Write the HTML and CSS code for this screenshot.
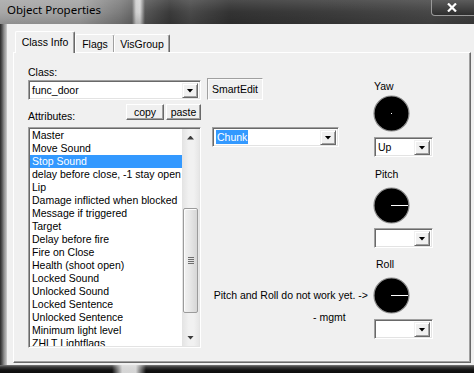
FILE: index.html
```html
<!DOCTYPE html>
<html lang="en">
<head>
    <meta charset="UTF-8">
    <meta name="viewport" content="width=device-width, initial-scale=1.0">
    <title>Object Properties</title>
    <link rel="stylesheet" href="styles.css">
</head>
<body>
    <div class="window">
        <div class="titlebar">
            <span class="title">Object Properties</span>
            <div class="close">
                <svg width="10" height="9" viewBox="0 0 10 9"><path d="M1 0.5 L9 8.5 M9 0.5 L1 8.5" stroke="#fff" stroke-width="2.2"/></svg>
            </div>
        </div>
        <div class="frame">
            <div class="edge-left"></div>
            <div class="client">
                <div class="tabs">
                    <div class="tab active">Class Info</div>
                    <div class="tab flags">Flags</div>
                    <div class="tab visgroup">VisGroup</div>
                </div>
                <div class="panel">
                    <!-- class + keyvalue list -->
                    <div class="col-left">
                        <div class="label">Class:</div>
                        <div class="combo class-combo">
                            <span class="combo-text">func_door</span>
                            <span class="drop"></span>
                        </div>
                        <div class="attr-row">
                            <div class="label attr-label">Attributes:</div>
                            <div class="buttons">
                                <button class="btn copy">copy</button>
                                <button class="btn paste">paste</button>
                            </div>
                        </div>
                        <div class="listbox">
                            <ul class="items">
                                <li>Master</li>
                                <li>Move Sound</li>
                                <li class="selected">Stop Sound</li>
                                <li>delay before close, -1 stay open</li>
                                <li>Lip</li>
                                <li>Damage inflicted when blocked</li>
                                <li>Message if triggered</li>
                                <li>Target</li>
                                <li>Delay before fire</li>
                                <li>Fire on Close</li>
                                <li>Health (shoot open)</li>
                                <li>Locked Sound</li>
                                <li>Unlocked Sound</li>
                                <li>Locked Sentence</li>
                                <li>Unlocked Sentence</li>
                                <li>Minimum light level</li>
                                <li>ZHLT Lightflags</li>
                            </ul>
                            <div class="scrollbar">
                                <div class="sb-btn"><span class="arrow up"></span></div>
                                <div class="sb-track">
                                    <div class="sb-thumb"><span class="grip"></span></div>
                                </div>
                                <div class="sb-btn"><span class="arrow down"></span></div>
                            </div>
                        </div>
                    </div>

                    <!-- value editor -->
                    <div class="col-mid">
                        <button class="btn smartedit">SmartEdit</button>
                        <div class="combo value-combo">
                            <span class="combo-text"><span class="hilite">Chunk</span></span>
                            <span class="drop"></span>
                        </div>
                        <div class="note">Pitch and Roll do not work yet. -&gt;</div>
                        <div class="note mgmt">- mgmt</div>
                    </div>

                    <!-- angles -->
                    <div class="col-right">
                        <div class="label dial-label yaw">Yaw</div>
                        <svg class="dial yaw-dial" width="37" height="37" viewBox="0 0 37 37">
                            <circle cx="18.5" cy="18.5" r="17.5" fill="#000" stroke="#8c8c8c" stroke-width="1.2"/>
                            <rect x="18" y="18" width="1" height="1" fill="#fff"/>
                        </svg>
                        <div class="combo angle-combo">
                            <span class="combo-text">Up</span>
                            <span class="drop"></span>
                        </div>

                        <div class="label dial-label pitch">Pitch</div>
                        <svg class="dial" width="37" height="37" viewBox="0 0 37 37">
                            <circle cx="18.5" cy="18.5" r="17.5" fill="#000" stroke="#8c8c8c" stroke-width="1.2"/>
                            <line x1="18" y1="18.5" x2="35" y2="18.5" stroke="#fff" stroke-width="1"/>
                        </svg>
                        <div class="combo angle-combo">
                            <span class="combo-text"></span>
                            <span class="drop"></span>
                        </div>

                        <div class="label dial-label roll">Roll</div>
                        <svg class="dial" width="37" height="37" viewBox="0 0 37 37">
                            <circle cx="18.5" cy="18.5" r="17.5" fill="#000" stroke="#8c8c8c" stroke-width="1.2"/>
                            <line x1="18" y1="18.5" x2="35" y2="18.5" stroke="#fff" stroke-width="1"/>
                        </svg>
                        <div class="combo angle-combo">
                            <span class="combo-text"></span>
                            <span class="drop"></span>
                        </div>
                    </div>
                </div>
            </div>
        </div>
        <div class="edge-bottom"></div>
    </div>
</body>
</html>
```

FILE: styles.css
```css
* {
    box-sizing: border-box;
}
body {
    margin: 0;
    background: #1c1c1c;
    font-family: 'Liberation Sans', Arial, sans-serif;
    font-size: 10.5px;
    color: #000;
}
.window {
    width: 474px;
    height: 373px;
    display: flex;
    flex-direction: column;
    overflow: hidden;
}

/* title bar */
.titlebar {
    height: 24px;
    flex: none;
    display: flex;
    align-items: flex-start;
    background:
        linear-gradient(180deg, rgba(255,255,255,0.12) 0, rgba(0,0,0,0) 12px, rgba(0,0,0,0.15) 24px),
        linear-gradient(90deg, #a8a8a8 0, #a2a2a2 80px, #7c7c7c 120px, #6a6a6a 132px, #cfcfcf 136px, #d6d6d6 140px, #565656 145px, #3a3a3a 170px, #4a4a4a 190px, #333 230px, #3c3c3c 330px, #474747 430px, #3e3e3e 474px);
}
.title {
    font-family: 'Noto Sans', sans-serif;
    font-size: 11.5px;
    line-height: 16px;
    padding: 2px 0 0 7px;
    color: #000;
}
.close {
    margin-left: auto;
    margin-right: -4px;
    width: 47px;
    height: 16px;
    border: 1px solid #9a9a9a;
    border-top: none;
    border-radius: 0 0 0 4px;
    background: linear-gradient(180deg, #5c5c5c, #2e2e2e);
    display: flex;
    align-items: center;
    justify-content: center;
    padding-right: 6px;
}

/* frame */
.frame {
    flex: 1;
    display: flex;
}
.edge-left {
    width: 7px;
    background: linear-gradient(90deg, #2a2a2a 0, #555 2px, #8e8e8e 4px, #b4b4b4 6px, #d2d2d2 7px);
}
.client {
    flex: 1;
    background: #f0f0f0;
    padding: 7px 3px 2px 6px;
    display: flex;
    flex-direction: column;
}
.edge-bottom {
    height: 8px;
    flex: none;
    background:
        linear-gradient(180deg, #7a7a7a 0, #3a3a3a 2px, #141414 5px, #0c0c0c 8px);
}
.edge-bottom::after {
    content: "";
    display: block;
    margin-left: 112px;
    width: 34px;
    height: 8px;
    background: linear-gradient(90deg, rgba(255,255,255,0), rgba(235,235,235,0.9) 30%, rgba(235,235,235,0.9) 70%, rgba(255,255,255,0));
}

/* tabs */
.tabs {
    height: 21px;
    flex: none;
    display: flex;
    align-items: flex-end;
    padding-left: 2px;
}
.tab {
    height: 18px;
    padding-top: 3px;
    line-height: 13px;
    text-align: center;
    border: 1px solid;
    border-color: #fff #696969 #f0f0f0 #fff;
    border-bottom: none;
    box-shadow: inset -1px 0 #a0a0a0;
    border-radius: 2px 2px 0 0;
}
.tab.active {
    width: 60px;
    height: 22px;
    padding-top: 4px;
    margin-bottom: -1px;
    background: #f0f0f0;
    position: relative;
    z-index: 1;
}
.tab.flags {
    width: 40px;
}
.tab.visgroup {
    width: 56px;
    margin-left: -1px;
}

/* panel */
.panel {
    height: 311px;
    border: 1px solid;
    border-color: #fff #696969 #696969 #fff;
    box-shadow: inset -1px -1px #a0a0a0;
    display: flex;
    padding-left: 14px;
}
.label {
    line-height: 13px;
    height: 13px;
    white-space: nowrap;
}

.col-left {
    width: 173px;
    padding-top: 13px;
    display: flex;
    flex-direction: column;
}
.col-mid {
    width: 161px;
    margin-left: 6px;
    display: flex;
    flex-direction: column;
    align-items: flex-start;
}
.col-right {
    width: 59px;
    margin-left: 6px;
    padding-top: 27px;
    display: flex;
    flex-direction: column;
}

/* combos */
.combo {
    height: 20px;
    display: flex;
    background: #fff;
    border: 1px solid;
    border-color: #a0a0a0 #fff #fff #a0a0a0;
    box-shadow: inset 1px 1px #696969, inset -1px -1px #e3e3e3;
    padding: 2px 2px 1px 2px;
}
.combo-text {
    flex: 1;
    line-height: 15px;
    padding-left: 1px;
    white-space: nowrap;
}
.drop {
    width: 16px;
    height: 15px;
    background: #f0f0f0;
    border: 1px solid;
    border-color: #f0f0f0 #696969 #696969 #f0f0f0;
    box-shadow: inset 1px 1px #fff, inset -1px -1px #a0a0a0;
    display: flex;
    align-items: center;
    justify-content: center;
}
.drop::after {
    content: "";
    width: 7px;
    height: 4px;
    background: #000;
    clip-path: polygon(0 0, 100% 0, 50% 100%);
}
.class-combo {
    margin-top: 1px;
}
.value-combo {
    width: 127px;
    margin-top: 27px;
    margin-left: 5px;
}
.hilite {
    background: #3399ff;
    color: #fff;
    padding: 1px 1px;
}
.angle-combo {
    width: 59px;
}

/* buttons */
.btn {
    font: inherit;
    color: #000;
    height: 16px;
    padding: 0;
    line-height: 13px;
    background: #f0f0f0;
    border: 1px solid;
    border-color: #fff #696969 #696969 #fff;
    box-shadow: inset -1px -1px #a0a0a0;
}
.attr-row {
    height: 23px;
    margin-top: 4px;
    display: flex;
    justify-content: space-between;
    align-items: flex-start;
}
.attr-label {
    margin-top: 6px;
}
.buttons {
    display: flex;
    gap: 2px;
}
.btn.copy {
    width: 38px;
}
.btn.paste {
    width: 35px;
}
.btn.smartedit {
    width: 56px;
    height: 22px;
    margin-top: 25px;
    border-color: #a0a0a0 #fff #fff #a0a0a0;
    box-shadow: inset 1px 1px #fafafa;
    padding-top: 1px;
}

/* list */
.listbox {
    height: 221px;
    display: flex;
    background: #fff;
    border: 1px solid;
    border-color: #a0a0a0 #fff #fff #a0a0a0;
    box-shadow: inset 1px 1px #696969, inset -1px -1px #e3e3e3;
    padding: 1px;
    overflow: hidden;
}
.items {
    flex: 1;
    list-style: none;
    margin: 0;
    padding: 0;
    overflow: hidden;
}
.items li {
    height: 13px;
    line-height: 13px;
    padding-left: 2px;
    white-space: nowrap;
}
.items li.selected {
    background: #3399ff;
    color: #fff;
}
.scrollbar {
    width: 17px;
    display: flex;
    flex-direction: column;
    background: linear-gradient(90deg, #e3e3e3, #f1f1f1 40%, #f1f1f1 70%, #e6e6e6);
}
.sb-btn {
    height: 17px;
    display: flex;
    align-items: center;
    justify-content: center;
}
.arrow {
    width: 7px;
    height: 4px;
    background: #3c3c3c;
}
.arrow.up {
    clip-path: polygon(50% 0, 100% 100%, 0 100%);
}
.arrow.down {
    clip-path: polygon(0 0, 100% 0, 50% 100%);
}
.sb-track {
    flex: 1;
    display: flex;
    flex-direction: column;
    align-items: center;
}
.sb-thumb {
    width: 15px;
    height: 105px;
    margin-top: 62px;
    border: 1px solid #9b9b9b;
    border-radius: 2px;
    background: linear-gradient(90deg, #f2f2f2, #e6e6e6 50%, #d6d6d6);
    box-shadow: inset 1px 1px #fcfcfc;
    display: flex;
    align-items: center;
    justify-content: center;
}
.grip {
    width: 6px;
    height: 7px;
    background: repeating-linear-gradient(180deg, #6d6d6d 0, #6d6d6d 1px, transparent 1px, transparent 2px);
}

/* notes */
.note {
    line-height: 13px;
    white-space: nowrap;
    width: 161px;
    text-align: right;
    margin-top: 142px;
}
.note.mgmt {
    margin-top: 9px;
    text-align: left;
    padding-left: 106px;
}

/* dials */
.dial {
    display: block;
    margin-left: -1px;
    flex: none;
}
.yaw-dial {
    margin-top: 2px;
    margin-bottom: 5px;
}
.dial-label.pitch {
    margin-top: 11px;
    padding-left: 1px;
}
.dial-label.roll {
    margin-top: 10px;
    padding-left: 2px;
}
.dial-label.pitch + .dial,
.dial-label.roll + .dial {
    margin-top: 6px;
    margin-bottom: 4px;
}
.dial-label.roll + .dial {
    margin-bottom: 5px;
}
```
